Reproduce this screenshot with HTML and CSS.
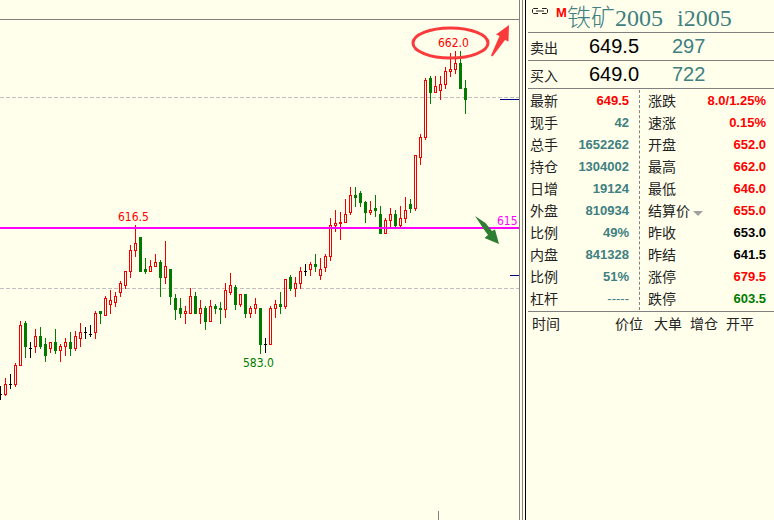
FILE: index.html
```html
<!DOCTYPE html>
<html lang="zh-CN">
    <head>
        <meta charset="UTF-8" />
        <meta name="viewport" content="width=device-width, initial-scale=1.0" />
        <title>铁矿2005</title>
        <link rel="stylesheet" href="styles.css">
    </head>
    <body>
        <main class="chart">
            <svg class="kline" viewBox="0 0 519 520">
                <path class="frame" d="M0 19.5H519M438.5 511V520" />
                <path class="grid" d="M0 97.5H519M0 288.5H519" />
                <g class="candles"></g>
                <path class="level" d="M0 228H519" />
                <path class="mark" d="M500 99.5H519M510 275.5H519" />
                <text class="red" x="118" y="221">616.5</text>
                <text class="red" x="438" y="47">662.0</text>
                <text class="green" x="243" y="367">583.0</text>
                <text class="pink" x="497" y="225">615</text>
                <ellipse class="circle" cx="450.5" cy="43" rx="37.5" ry="15" />
                <path class="arrow-up" d="M509 25L496 34.500L499.500 36L491 55.500L492.500 56.500L505 40L508.500 41.500Z" />
                <path class="arrow-down" d="M475 216L485 231L488 235L484.500 238L499 244L495 229.500L492 231L485.500 223Z" />
            </svg>
        </main>
        <div class="splitter"></div>
        <aside class="panel">
            <header class="title">
                <svg class="link" viewBox="0 0 16 6">
                    <path d="M6 .5H1.500L.5 1.500V4.500L1.500 5.500H6M10 .5H14.500L15.500 1.500V4.500L14.500 5.500H10M4 3H12" />
                </svg>
                <b class="flag">M</b>
                <h1><span>铁矿2005</span><span>i2005</span></h1>
            </header>
            <table class="order">
                <tr><th>卖出</th><td>649.5</td><td class="teal">297</td></tr>
                <tr><th>买入</th><td>649.0</td><td class="teal">722</td></tr>
            </table>
            <div class="quotes">
                <table class="quote">
                    <tr><th>最新</th><td class="red">649.5</td></tr>
                    <tr><th>现手</th><td>42</td></tr>
                    <tr><th>总手</th><td>1652262</td></tr>
                    <tr><th>持仓</th><td>1304002</td></tr>
                    <tr><th>日增</th><td>19124</td></tr>
                    <tr><th>外盘</th><td>810934</td></tr>
                    <tr><th>比例</th><td>49%</td></tr>
                    <tr><th>内盘</th><td>841328</td></tr>
                    <tr><th>比例</th><td>51%</td></tr>
                    <tr><th>杠杆</th><td class="none">-----</td></tr>
                </table>
                <table class="quote">
                    <tr><th>涨跌</th><td class="red">8.0/1.25%</td></tr>
                    <tr><th>速涨</th><td class="red">0.15%</td></tr>
                    <tr><th>开盘</th><td class="red">652.0</td></tr>
                    <tr><th>最高</th><td class="red">662.0</td></tr>
                    <tr><th>最低</th><td class="red">646.0</td></tr>
                    <tr><th><button class="settle" type="button">结算价</button></th><td class="red">655.0</td></tr>
                    <tr><th>昨收</th><td class="black">653.0</td></tr>
                    <tr><th>昨结</th><td class="black">641.5</td></tr>
                    <tr><th>涨停</th><td class="red">679.5</td></tr>
                    <tr><th>跌停</th><td class="green">603.5</td></tr>
                </table>
            </div>
            <table class="ticks">
                <tr><th>时间</th><th>价位</th><th>大单</th><th>增仓</th><th>开平</th></tr>
            </table>
        </aside>
        <script src="chart.js"></script>
    </body>
</html>
```

FILE: styles.css
```css
* {
    box-sizing: border-box;
}
body {
    display: flex;
    min-height: 100vh;
    margin: 0;
    background: #ffffec;
    color: #222;
    font-family: "Liberation Sans", "Noto Sans CJK SC", sans-serif;
    font-size: 14px;
}
.chart {
    flex: 1;
    min-width: 0;
    border-right: 1px solid #808080;
}
.kline {
    display: block;
    width: 100%;
}
.kline path {
    fill: none;
}
.kline text {
    font-family: "DejaVu Sans Condensed", "DejaVu Sans", sans-serif;
    font-size: 12px;
    fill: currentColor;
}
.kline .frame {
    stroke: #808080;
}
.kline .grid {
    stroke: #c0c0c0;
    stroke-dasharray: 4 2;
}
.kline .level {
    stroke: #f0f;
    stroke-width: 2;
}
.kline .mark {
    stroke: #000080;
}
.kline .circle {
    fill: none;
    stroke: #fb3b3b;
    stroke-width: 3;
}
.kline .arrow-up {
    fill: #fb3b3b;
}
.kline .arrow-down {
    fill: #2e7d32;
}
.candles {
    shape-rendering: crispEdges;
}
.up {
    stroke: #f00000;
}
.down {
    stroke: #007b00;
}
.kline .down {
    fill: #007b00;
}
.flat {
    stroke: #000;
}
.splitter {
    width: 4px;
    margin-left: 2px;
    border-left: 1px solid #808080;
    border-right: 1px solid #000;
}
.panel {
    flex: 0 0 248px;
    min-width: 0;
    padding-left: 2px;
}
.title {
    display: flex;
    align-items: flex-start;
    height: 33px;
    padding-left: 4px;
    border-bottom: 1px solid #808080;
}
.link {
    width: 16px;
    height: 6px;
    margin: 8px 8px 0 0;
    fill: none;
    stroke: #222;
}
.flag {
    width: 11px;
    margin-top: 5px;
    color: #f00;
    font-size: 13px;
    line-height: 15px;
}
.title h1 {
    display: flex;
    gap: 14px;
    margin: 3px 0 0;
    color: #408080;
    font-family: "Liberation Serif", "Noto Sans CJK SC", serif;
    font-size: 24px;
    font-weight: 300;
    line-height: 30px;
}
table {
    width: 100%;
    border-spacing: 0;
}
th,
td {
    padding: 0;
    font-weight: normal;
    text-align: left;
    white-space: nowrap;
}
.order th,
.order td {
    height: 28px;
    border-bottom: 1px solid #808080;
}
.order th {
    width: 61px;
    padding-left: 2px;
}
.order td {
    width: 83px;
    color: #000;
    font-size: 20px;
    line-height: 27px;
}
.order td:last-child {
    width: auto;
}
.quotes {
    display: flex;
    padding: 1px 0;
    border-bottom: 1px solid #808080;
}
.quote {
    flex: 1;
    margin-right: 8px;
}
.quote:first-child {
    flex: 0 0 112px;
    margin: 0;
    border-right: 1px dashed #808080;
}
.quote tr {
    height: 22px;
}
.quote th {
    padding-left: 2px;
    line-height: 22px;
}
.quote td {
    color: #408080;
    font-size: 13px;
    font-weight: bold;
    line-height: 22px;
    text-align: right;
}
.quote:first-child td {
    padding-right: 10px;
}
.quote + .quote th {
    padding-left: 8px;
}
.settle {
    display: flex;
    align-items: center;
    gap: 3px;
    padding: 0;
    border: none;
    background: none;
    color: inherit;
    font: inherit;
    line-height: 22px;
}
.settle::after {
    content: "";
    margin-top: 4px;
    border: 5px solid transparent;
    border-top-color: #a0a0a0;
    border-bottom: none;
}
.ticks th {
    width: 36px;
    height: 22px;
}
.ticks th:first-child {
    width: 87px;
    padding-left: 4px;
}
.ticks th:nth-child(2) {
    width: 39px;
}
.ticks th:last-child {
    width: auto;
}
.kline .red,
.quote .red {
    color: #f00;
}
.kline .green,
.quote .green {
    color: #007b00;
}
.kline .pink {
    color: #f0f;
}
.quote .black {
    color: #000;
}
.order .teal {
    color: #408080;
}
.quote .none {
    font-weight: normal;
}
```

FILE: chart.js
```javascript
// [方向, 最高, 实体上沿, 实体下沿, 最低]，u 涨 d 跌 f 平
var candles = [
    ['f', 386, 394, 395, 400],
    ['u', 378, 384, 395, 396],
    ['f', 374, 384, 385, 389],
    ['u', 363, 365, 385, 387],
    ['u', 321, 325, 366, 366],
    ['d', 321, 323, 347, 358],
    ['f', 342, 348, 349, 358],
    ['u', 329, 336, 347, 353],
    ['d', 327, 336, 347, 349],
    ['d', 338, 344, 356, 362],
    ['u', 342, 342, 349, 353],
    ['d', 329, 342, 351, 354],
    ['u', 344, 346, 351, 362],
    ['u', 338, 342, 347, 356],
    ['d', 332, 342, 349, 356],
    ['u', 331, 336, 349, 351],
    ['u', 323, 332, 339, 347],
    ['f', 327, 332, 333, 339],
    ['f', 325, 334, 335, 337],
    ['u', 311, 313, 333, 339],
    ['d', 311, 311, 314, 324],
    ['u', 296, 298, 316, 316],
    ['u', 290, 300, 305, 314],
    ['u', 292, 296, 303, 307],
    ['u', 281, 283, 293, 297],
    ['u', 271, 271, 286, 289],
    ['u', 245, 250, 272, 278],
    ['u', 225, 243, 251, 257],
    ['d', 237, 237, 272, 272],
    ['d', 258, 269, 272, 274],
    ['u', 260, 266, 272, 272],
    ['u', 254, 262, 267, 267],
    ['d', 260, 262, 278, 297],
    ['u', 241, 266, 278, 284],
    ['d', 269, 269, 297, 305],
    ['d', 294, 298, 310, 320],
    ['d', 298, 308, 314, 318],
    ['u', 306, 311, 314, 324],
    ['u', 288, 296, 314, 314],
    ['d', 292, 296, 314, 314],
    ['u', 300, 308, 314, 324],
    ['d', 306, 308, 322, 330],
    ['u', 300, 306, 322, 322],
    ['d', 304, 306, 309, 314],
    ['d', 302, 308, 310, 324],
    ['u', 283, 290, 310, 318],
    ['u', 273, 285, 293, 295],
    ['d', 285, 287, 305, 310],
    ['u', 294, 294, 305, 307],
    ['d', 294, 294, 314, 318],
    ['u', 306, 308, 314, 318],
    ['u', 298, 304, 309, 314],
    ['d', 308, 308, 345, 354],
    ['f', 338, 344, 345, 353],
    ['u', 306, 308, 345, 345],
    ['u', 300, 304, 309, 318],
    ['d', 292, 304, 307, 314],
    ['u', 279, 279, 307, 309],
    ['d', 275, 277, 289, 291],
    ['u', 277, 283, 289, 297],
    ['u', 267, 271, 284, 289],
    ['f', 264, 271, 272, 276],
    ['u', 262, 264, 270, 276],
    ['d', 254, 264, 267, 272],
    ['u', 258, 269, 276, 280],
    ['u', 254, 256, 268, 272],
    ['u', 218, 225, 257, 261],
    ['u', 210, 223, 226, 232],
    ['u', 212, 222, 224, 240],
    ['u', 199, 214, 223, 223],
    ['u', 187, 195, 213, 215],
    ['d', 187, 195, 198, 207],
    ['d', 191, 193, 203, 207],
    ['d', 201, 202, 213, 223],
    ['u', 201, 210, 213, 215],
    ['d', 195, 208, 211, 217],
    ['d', 206, 214, 234, 234],
    ['u', 218, 220, 234, 234],
    ['u', 208, 214, 221, 227],
    ['d', 210, 214, 226, 228],
    ['u', 206, 218, 226, 227],
    ['u', 197, 210, 219, 223],
    ['d', 199, 204, 209, 213],
    ['u', 155, 155, 209, 211],
    ['u', 134, 137, 158, 165],
    ['u', 78, 80, 138, 140],
    ['d', 76, 78, 93, 104],
    ['u', 76, 86, 93, 93],
    ['u', 76, 84, 91, 100],
    ['u', 67, 71, 85, 89],
    ['u', 53, 69, 72, 77],
    ['u', 51, 63, 70, 74],
    ['d', 51, 63, 89, 89],
    ['d', 80, 88, 100, 114]
]
var names = { u: 'up', d: 'down', f: 'flat' }
var $candles = document.querySelector('.candles')

candles.forEach(function(item, i) {
    var x = i * 5 + 0.5
    var top = item[2] + 0.5
    var bottom = item[3] - 0.5
    // 影线不穿过实体，上涨为空心
    var d = 'M' + x + ' ' + item[1] + 'V' + item[2] + 'M' + x + ' ' + item[3] + 'V' + item[4]
    if (item[0] === 'f') {
        d += 'M' + (x - 1.5) + ' ' + top + 'h3'
    } else {
        d += 'M' + (x - 1) + ' ' + top + 'h2V' + bottom + 'h-2Z'
    }
    var path = document.createElementNS('http://www.w3.org/2000/svg', 'path')
    path.setAttribute('class', names[item[0]])
    path.setAttribute('d', d)
    $candles.appendChild(path)
})
```
